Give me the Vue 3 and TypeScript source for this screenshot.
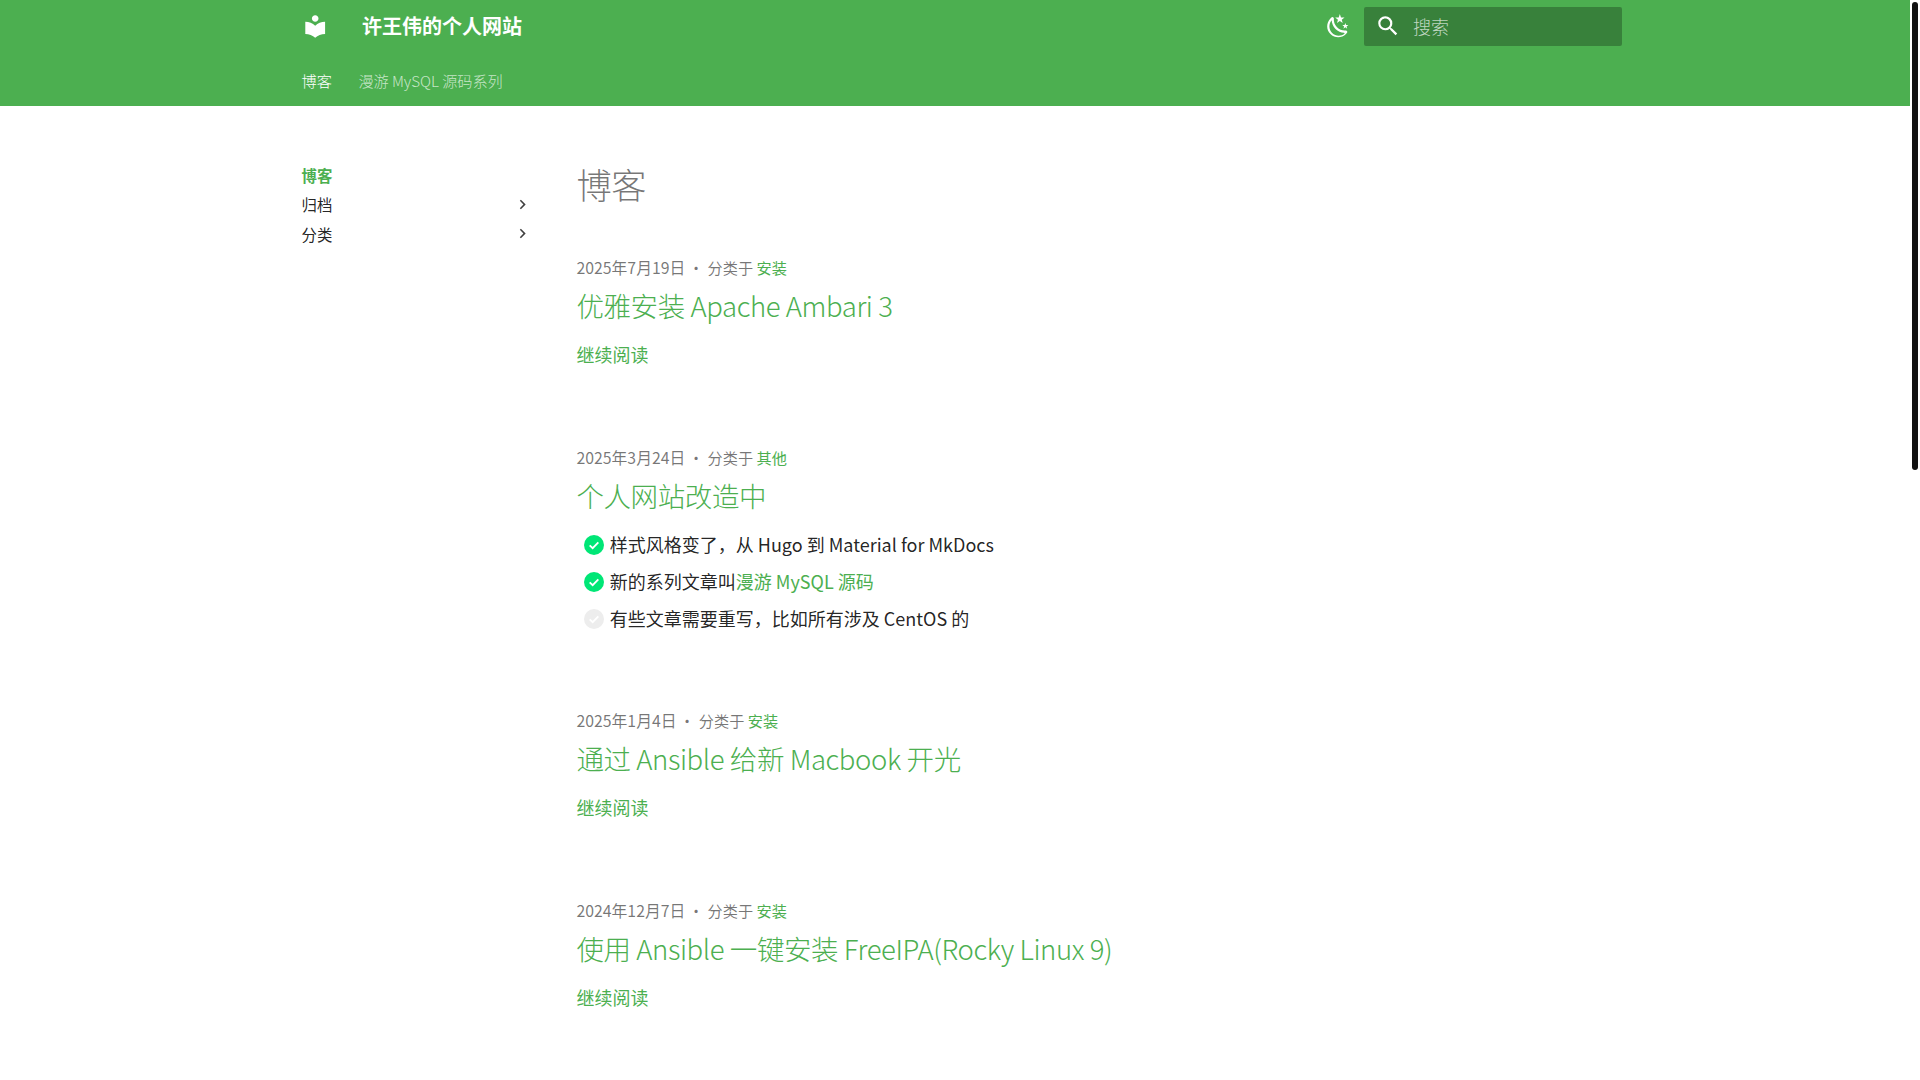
<script setup lang="ts">
interface Post {
  date: string
  category: string
  title: string
}
const posts: Post[] = [
  { date: '2025年7月19日', category: '安装', title: '优雅安装 Apache Ambari 3' },
  { date: '2025年3月24日', category: '其他', title: '个人网站改造中' },
  { date: '2025年1月4日', category: '安装', title: '通过 Ansible 给新 Macbook 开光' },
  { date: '2024年12月7日', category: '安装', title: '使用 Ansible 一键安装 FreeIPA(Rocky Linux 9)' },
]
</script>

<template>
  <div class="page">
    <div class="viewport">
      <header class="header">
        <div class="grid head-row">
          <svg class="logo" viewBox="0 0 24 24"><path d="M12 11.55C9.64 9.35 6.48 8 3 8v11c3.48 0 6.64 1.35 9 3.55 2.36-2.19 5.52-3.55 9-3.55V8c-3.48 0-6.64 1.35-9 3.55zM12 8c1.66 0 3-1.34 3-3s-1.34-3-3-3-3 1.34-3 3 1.34 3 3 3z"/></svg>
          <div class="site-title">许王伟的个人网站</div>
          <svg class="theme" viewBox="0 0 24 24"><path d="M17.75 4.09 15.22 6.03 16.13 9.09 13.5 7.28 10.87 9.09 11.78 6.03 9.25 4.09 12.44 4 13.5 1 14.56 4 17.75 4.09M21.25 11 19.61 12.25 20.2 14.23 18.5 13.06 16.8 14.23 17.39 12.25 15.75 11 17.81 10.95 18.5 9 19.19 10.95 21.25 11M18.97 15.95C19.8 15.87 20.69 17.05 20.16 17.8 19.84 18.25 19.5 18.67 19.08 19.07 15.17 23 8.84 23 4.94 19.07 1.03 15.17 1.03 8.83 4.94 4.93 5.34 4.53 5.76 4.17 6.21 3.85 6.96 3.32 8.14 4.21 8.06 5.04 7.79 7.9 8.75 10.87 10.95 13.06 13.14 15.26 16.1 16.22 18.97 15.95M17.33 17.97C14.5 17.81 11.7 16.64 9.53 14.5 7.36 12.31 6.2 9.5 6.04 6.67 3.23 9.98 3.34 14.98 6.5 18.11 9.65 21.27 14.66 21.38 17.97 18.55 17.75 18.5 17.54 18.24 17.33 17.97Z"/></svg>
          <div class="search">
            <svg class="search-icon" viewBox="0 0 24 24"><path d="M9.5 3A6.5 6.5 0 0 1 16 9.5c0 1.61-.59 3.09-1.56 4.23l.27.27h.79l5 5-1.5 1.5-5-5v-.79l-.27-.27A6.516 6.516 0 0 1 9.5 16 6.5 6.5 0 0 1 3 9.5 6.5 6.5 0 0 1 9.5 3m0 2C7 5 5 7 5 9.5S7 14 9.5 14 14 12 14 9.5 12 5 9.5 5z"/></svg>
            <span class="search-text">搜索</span>
          </div>
        </div>
        <nav class="grid tabs">
          <a class="tab active">博客</a>
          <a class="tab">漫游 MySQL 源码系列</a>
        </nav>
      </header>

      <div class="grid body">
        <aside class="side">
          <div class="side-item current">博客</div>
          <div class="side-item">归档<svg class="chev" viewBox="0 0 24 24"><path d="M8.59 16.58 13.17 12 8.59 7.41 10 6l6 6-6 6-1.41-1.41z"/></svg></div>
          <div class="side-item">分类<svg class="chev" viewBox="0 0 24 24"><path d="M8.59 16.58 13.17 12 8.59 7.41 10 6l6 6-6 6-1.41-1.41z"/></svg></div>
        </aside>
        <main class="content">
          <h1 class="h1">博客</h1>
          <article v-for="(p, i) in posts" :key="p.title" class="post">
            <div class="meta">
              <span class="date">{{ p.date }}</span><span class="dot">·</span><span>分类于 <a class="link">{{ p.category }}</a></span>
            </div>
            <h2 class="post-title">{{ p.title }}</h2>
            <ul v-if="i === 1" class="tasks">
              <li>
                <svg class="check" viewBox="0 0 24 24"><circle cx="12" cy="12" r="12" fill="#00e676"/><path d="M6.8 12.4l3.6 3.5 6.8-7" fill="none" stroke="#fff" stroke-width="2.2"/></svg>
                <span>样式风格变了，从 Hugo 到 Material for MkDocs</span>
              </li>
              <li>
                <svg class="check" viewBox="0 0 24 24"><circle cx="12" cy="12" r="12" fill="#00e676"/><path d="M6.8 12.4l3.6 3.5 6.8-7" fill="none" stroke="#fff" stroke-width="2.2"/></svg>
                <span>新的系列文章叫<a class="link">漫游 MySQL 源码</a></span>
              </li>
              <li>
                <svg class="check" viewBox="0 0 24 24"><circle cx="12" cy="12" r="12" fill="#ededed"/><path d="M6.8 12.4l3.6 3.5 6.8-7" fill="none" stroke="#fff" stroke-width="2.2"/></svg>
                <span>有些文章需要重写，比如所有涉及 CentOS 的</span>
              </li>
            </ul>
            <a v-else class="more">继续阅读</a>
          </article>
        </main>
      </div>
    </div>
    <div class="scrollbar"><div class="thumb"></div></div>
  </div>
</template>

<style>
html, body { margin: 0; overflow: hidden; background: #fff; }
</style>

<style scoped>
.page {
  display: flex;
  height: 1080px;
  overflow: hidden;
  font-family: "Noto Sans CJK SC", "Noto Sans", sans-serif;
  color: rgba(0, 0, 0, 0.87);
  font-size: 18px;
}
.viewport { width: 1910px; flex: none; }
.scrollbar { flex: 1; display: flex; justify-content: flex-end; padding: 2px 2px 0 0; }
.thumb { width: 6px; height: 468px; background: #111; border-radius: 3px; }
.grid { width: 1342px; margin: 0 auto; box-sizing: border-box; }
.header { background: #4caf50; color: #fff; height: 105.6px; }
.head-row { display: flex; align-items: center; height: 52.8px; padding: 0 4px 0 17.6px; }
.logo { width: 26.4px; height: 26.4px; fill: #fff; flex: none; }
.site-title { margin-left: 34px; font-size: 20px; line-height: 24px; font-weight: 700; flex: 1; }
.theme { width: 26.4px; height: 26.4px; fill: #fff; margin-right: 13px; }
.search { width: 258px; height: 39.6px; background: rgba(0, 0, 0, 0.26); border-radius: 2px; display: flex; align-items: center; box-sizing: border-box; padding-left: 11px; }
.search-icon { width: 26px; height: 26px; fill: #fff; }
.search-text { margin-left: 12px; font-size: 18px; font-weight: 300; color: rgba(255, 255, 255, 0.7); }
.tabs { display: flex; height: 52.8px; align-items: center; padding: 2px 17.6px 0; gap: 26.5px; font-size: 15.2px; font-weight: 300; letter-spacing: -0.05px; }
.tab { color: rgba(255, 255, 255, 0.7); }
.tab.active { color: #fff; }
.body { display: flex; padding-top: 26px; }
.side { width: 275px; flex: none; padding: 28.8px 0 0 17.6px; box-sizing: border-box; font-size: 15.4px; }
.side-item { height: 29.4px; display: flex; align-items: center; justify-content: space-between; padding-right: 17.6px; width: 230px; }
.side-item.current { color: #4caf50; font-weight: 700; }
.chev { width: 19px; height: 19px; fill: rgba(0, 0, 0, 0.75); }
.content { flex: 1; padding-left: 17.4px; }
.h1 { margin: 0 0 48.4px; font-size: 35.2px; font-weight: 300; line-height: 45.8px; letter-spacing: -0.01em; color: rgba(0, 0, 0, 0.54); padding-top: 29.4px; }
.post { padding-bottom: 70.9px; }
.meta { font-size: 15.2px; line-height: 25px; color: rgba(0, 0, 0, 0.54); }
.date { font-size: 15.84px; }
.dot { margin: 0 4px 0 3px; }
.link { color: #4caf50; }
.post-title { margin: 5.6px 0 0; font-size: 27.5px; font-weight: 300; letter-spacing: -0.4px; color: #4caf50; line-height: 38.5px; }
.more { display: block; color: #4caf50; margin: 17.2px 0 6.8px; line-height: 26px; }
.tasks { list-style: none; margin: 11.5px 0 0.5px; padding: 0 0 0 7.6px; }
.tasks li { display: flex; align-items: center; gap: 5.8px; height: 37px; }
.check { width: 20px; height: 20px; flex: none; margin-top: 2px; }
</style>
